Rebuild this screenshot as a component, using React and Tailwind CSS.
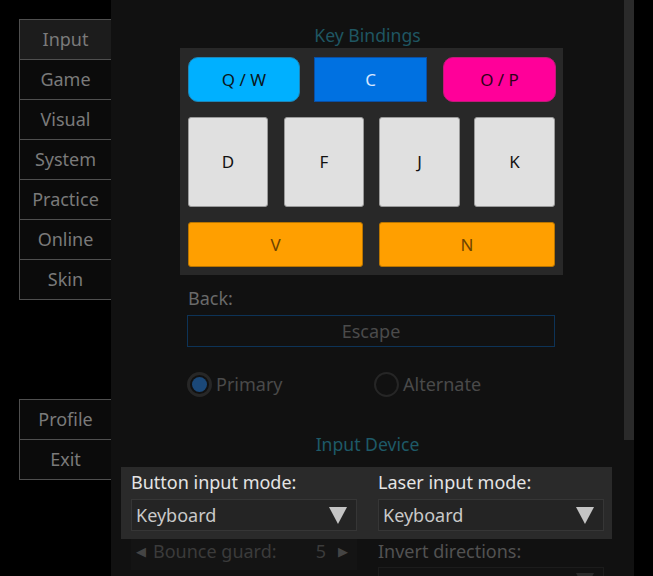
import React from "react";

const font = { fontFamily: '"Noto Sans", "Open Sans", sans-serif' };

function SideBtn({ label, active, last }) {
  return (
    <div
      className={`flex shrink-0 items-center justify-center w-[92px] border-l border-t border-[#4f4f4f] text-[18px] text-[#7a7a7a] ${
        last ? "h-[41px] border-b" : "h-[40px]"
      } ${active ? "bg-[#1c1c1c]" : "bg-[#0b0b0b]"}`}
    >
      {label}
    </div>
  );
}

function Arrow({ color = "#c4c4c4" }) {
  return (
    <svg width="18" height="18" viewBox="0 0 18 18">
      <polygon points="0,1 18,1 9,18" fill={color} />
    </svg>
  );
}

function Dropdown({ value }) {
  return (
    <div className="flex items-center justify-between h-[32px] w-[226px] bg-[#242424] border border-[#363636] pl-[4px] pr-[9px] text-[18px] text-[#c9c9c9]">
      <span>{value}</span>
      <Arrow />
    </div>
  );
}

export default function App() {
  return (
    <div className="flex w-[653px] h-[576px] bg-black overflow-hidden" style={font}>
      {/* Sidebar */}
      <div className="w-[111px] shrink-0 pl-[19px] pt-[19px] flex flex-col">
        <SideBtn label="Input" active />
        <SideBtn label="Game" />
        <SideBtn label="Visual" />
        <SideBtn label="System" />
        <SideBtn label="Practice" />
        <SideBtn label="Online" />
        <SideBtn label="Skin" last />
        <div className="mt-[99px] shrink-0">
          <SideBtn label="Profile" />
          <SideBtn label="Exit" last />
        </div>
      </div>

      {/* Panel */}
      <div className="w-[523px] shrink-0 bg-[#111111] flex h-full overflow-hidden">
        <div className="w-[513px] flex flex-col [&>*]:shrink-0">
          <div className="mt-[24px] h-[22px] leading-[22px] text-center text-[17.6px] text-[#1f5662]">
            Key Bindings
          </div>

          {/* Key grid */}
          <div className="mt-[2px] ml-[69px] w-[383px] h-[227px] bg-[#282828] pt-[9px] pl-[8px] flex flex-col text-[17px] [&>*]:shrink-0">
            <div className="flex h-[45px]">
              <div className="w-[112px] h-full rounded-[10px] bg-[#00b0ff] border border-[#1d86b8] flex items-center justify-center text-[#0b1620]">
                Q / W
              </div>
              <div className="ml-[14px] w-[113px] h-full bg-[#0071e1] border border-[#0a4fa5] flex items-center justify-center text-[#d6e6ff]">
                C
              </div>
              <div className="ml-[16px] w-[113px] h-full rounded-[10px] bg-[#ff0099] border border-[#c01a78] flex items-center justify-center text-[#2e0018]">
                O / P
              </div>
            </div>
            <div className="flex h-[90px] mt-[15px]">
              <div className="w-[80px] h-full rounded-[3px] bg-[#e0e0e0] border border-[#9a9a9a] flex items-center justify-center text-[#111]">D</div>
              <div className="ml-[16px] w-[80px] h-full rounded-[3px] bg-[#e0e0e0] border border-[#9a9a9a] flex items-center justify-center text-[#111]">F</div>
              <div className="ml-[15px] w-[81px] h-full rounded-[3px] bg-[#e0e0e0] border border-[#9a9a9a] flex items-center justify-center text-[#111]">J</div>
              <div className="ml-[14px] w-[81px] h-full rounded-[3px] bg-[#e0e0e0] border border-[#9a9a9a] flex items-center justify-center text-[#111]">K</div>
            </div>
            <div className="flex h-[45px] mt-[15px]">
              <div className="w-[175px] h-full rounded-[3px] bg-[#ff9f00] border border-[#b87400] flex items-center justify-center text-[#6e4300]">V</div>
              <div className="ml-[16px] w-[176px] h-full rounded-[3px] bg-[#ff9f00] border border-[#b87400] flex items-center justify-center text-[#6e4300]">N</div>
            </div>
          </div>

          {/* Back */}
          <div className="ml-[76px] w-[368px] flex flex-col [&>*]:shrink-0">
            <div className="mt-[11px] h-[24px] leading-[24px] pl-[1px] text-[18px] text-[#6a6a6a]">Back:</div>
            <div className="mt-[5px] h-[32px] border border-[#0d3357] flex items-center justify-center text-[18px] text-[#4b4b4b]">
              Escape
            </div>
            <div className="mt-[25px] h-[25px] flex items-center text-[18px] text-[#4a4a4a]">
              <div className="flex items-center w-[187px]">
                <div className="w-[25px] h-[25px] rounded-full border-[3px] border-[#272727] flex items-center justify-center">
                  <div className="w-[15px] h-[15px] rounded-full bg-[#1b4878]" />
                </div>
                <span className="ml-[4px]">Primary</span>
              </div>
              <div className="flex items-center">
                <div className="w-[25px] h-[25px] rounded-full border-[2px] border-[#262626]" />
                <span className="ml-[4px]">Alternate</span>
              </div>
            </div>
          </div>

          <div className="mt-[35px] h-[24px] leading-[24px] text-center text-[17.6px] text-[#1e5a68]">
            Input Device
          </div>

          {/* Input device panel */}
          <div className="mt-[11px] ml-[10px] w-[491px] h-[72px] bg-[#2a2a2a] pl-[10px] pt-[3px] flex gap-[21px]">
            <div className="flex flex-col">
              <div className="h-[24px] leading-[24px] text-[18px] text-[#e4e4e4]">Button input mode:</div>
              <div className="mt-[5px]">
                <Dropdown value="Keyboard" />
              </div>
            </div>
            <div className="flex flex-col">
              <div className="h-[24px] leading-[24px] text-[18px] text-[#e4e4e4]">Laser input mode:</div>
              <div className="mt-[5px]">
                <Dropdown value="Keyboard" />
              </div>
            </div>
          </div>

          <div className="ml-[20px] flex gap-[21px]">
            <div className="w-[226px] h-[31px] bg-[#141414] flex items-start leading-[24px] text-[18px] text-[#3b3b3b] pl-[5px] pr-[9px]">
              <span className="text-[13px] text-[#444]">◀</span>
              <span className="ml-[7px]">Bounce guard:</span>
              <span className="ml-auto">5</span>
              <span className="ml-[12px] text-[13px] text-[#444]">▶</span>
            </div>
            <div className="flex flex-col">
              <div className="h-[24px] leading-[24px] text-[18px] text-[#525252]">Invert directions:</div>
              <div className="mt-[4px] h-[32px] w-[226px] border border-[#1c1c1c] bg-[#121212] flex justify-end pr-[9px] pt-[4px]">
                <Arrow color="#2a2a2a" />
              </div>
            </div>
          </div>
        </div>
        <div className="w-[10px] h-[440px] shrink-0 bg-[#2a2a2a]" />
      </div>
    </div>
  );
}
